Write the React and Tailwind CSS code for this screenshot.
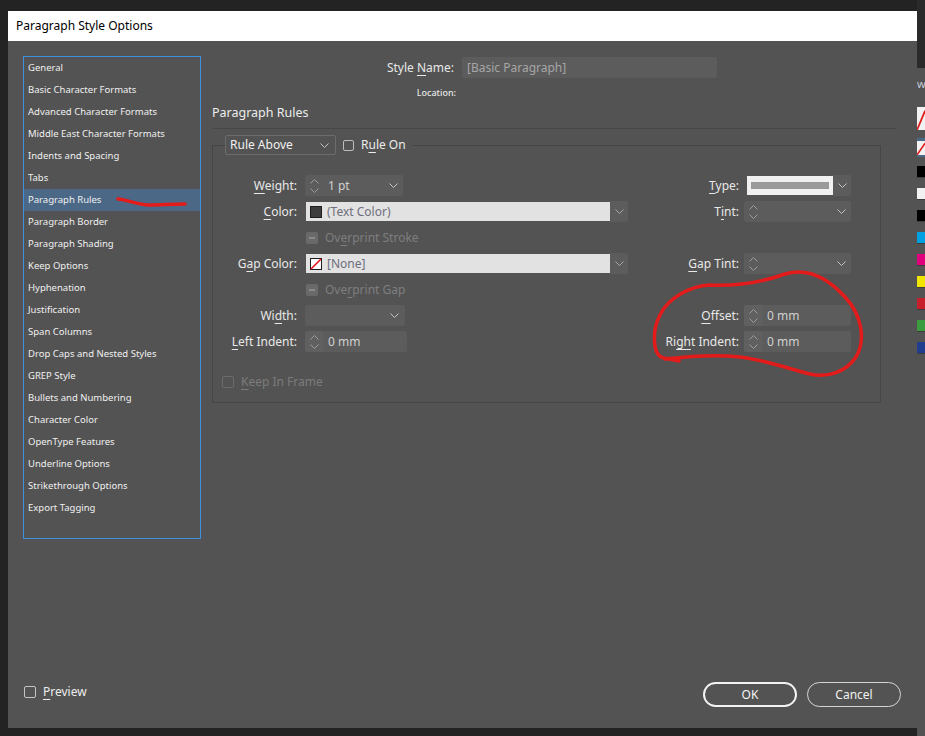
import React from "react";

const FONT = { fontFamily: '"Noto Sans", "Open Sans", sans-serif' };

function Chev({ color = "#c4c4c4" }) {
  return (
    <svg width="9" height="5" viewBox="0 0 9 5" className="shrink-0">
      <path d="M0.5 0.5 L4.5 4.5 L8.5 0.5" fill="none" stroke={color} strokeWidth="1" />
    </svg>
  );
}

function Spin() {
  return (
    <svg width="9" height="16" viewBox="0 0 9 16" className="shrink-0">
      <path d="M0.5 5.5 L4.5 1.5 L8.5 5.5 M0.5 10.5 L4.5 14.5 L8.5 10.5" fill="none" stroke="#9c9c9c" strokeWidth="1" />
    </svg>
  );
}

function U({ children }) {
  return <span className="underline decoration-1 underline-offset-[3px]">{children}</span>;
}

function LLabel({ children, dim }) {
  return (
    <div className={"w-[84px] shrink-0 text-right text-[12px] " + (dim ? "text-[#7c7c7c]" : "text-[#e8e8e8]")}>
      {children}
    </div>
  );
}

function RLabel({ children, gap = "mr-[5px]" }) {
  return <div className={"shrink-0 text-right text-[12px] text-[#e8e8e8] " + gap}>{children}</div>;
}

function SpinField({ w, value, splitSpin, drop }) {
  return (
    <div className={"flex h-[21px] items-center rounded-[2px] bg-[#5c5c5c] " + w}>
      <div className={"flex h-full w-[18px] items-center justify-center rounded-l-[2px] " + (splitSpin ? "bg-[#606060]" : "")}>
        <Spin />
      </div>
      <div className="flex-1 pl-[5px] text-[12px] text-[#d0d0d0]">{value}</div>
      {drop && (
        <div className="flex w-[20px] justify-center">
          <Chev />
        </div>
      )}
    </div>
  );
}

function ColorField({ swatch, text }) {
  return (
    <div className="ml-[9px] flex h-[21px] items-center">
      <div className="flex h-[19px] w-[304px] items-center bg-[#e2e2e2] pl-[4px]">
        {swatch}
        <span className="ml-[5px] text-[12px] text-[#6e6e7c]">{text}</span>
      </div>
      <div className="flex h-[21px] w-[18px] items-center justify-center rounded-r-[2px] bg-[#5c5c5c]">
        <Chev color="#a8a8a8" />
      </div>
    </div>
  );
}

function DisabledCheck({ children }) {
  return (
    <div className="ml-[9px] flex items-center">
      <div className="flex h-[12px] w-[12px] items-center justify-center rounded-[2px] bg-[#696969]">
        <div className="h-[2px] w-[6px] bg-[#8a8a8a]" />
      </div>
      <span className="ml-[7px] text-[12px] text-[#7e7e7e]">{children}</span>
    </div>
  );
}

const listItems = [
  "General",
  "Basic Character Formats",
  "Advanced Character Formats",
  "Middle East Character Formats",
  "Indents and Spacing",
  "Tabs",
  "Paragraph Rules",
  "Paragraph Border",
  "Paragraph Shading",
  "Keep Options",
  "Hyphenation",
  "Justification",
  "Span Columns",
  "Drop Caps and Nested Styles",
  "GREP Style",
  "Bullets and Numbering",
  "Character Color",
  "OpenType Features",
  "Underline Options",
  "Strikethrough Options",
  "Export Tagging",
];

const swatches = ["#000000", "#f2f2f2", "#000000", "#00a0e3", "#e0007c", "#f2e500", "#c8202a", "#3a9b3f", "#213d8e"];

function NoneSwatch({ className }) {
  return (
    <svg width="8" height="12" viewBox="0 0 8 12" preserveAspectRatio="none" className={className}>
      <rect x="0" y="0" width="8" height="12" fill="#f2f2f2" />
      <path d="M0 12 L8 2" stroke="#e01b1b" strokeWidth="1.5" />
    </svg>
  );
}

export default function App() {
  return (
    <div className="relative h-[736px] w-[925px] overflow-hidden bg-[#232323]" style={FONT}>
      <div className="flex h-full items-start">
        <div className="w-[8px] shrink-0" />
        {/* Dialog */}
        <div className="mt-[11px] flex h-[717px] w-[909px] shrink-0 flex-col">
          <div className="flex h-[30px] items-center bg-white pl-[8px] text-[12px] text-black">
            Paragraph Style Options
          </div>
          <div className="flex flex-1 flex-col bg-[#535353]">
            <div className="flex flex-1 pl-[15px] pt-[15px]">
              {/* left list */}
              <div className="h-[483px] w-[178px] shrink-0 border border-[#3d8fe0]">
                {listItems.map((t) => (
                  <div
                    key={t}
                    className={
                      "flex h-[22px] items-center pl-[4px] text-[9.5px] text-[#f0f0f0] " +
                      (t === "Paragraph Rules" ? "bg-[#4b6886]" : "")
                    }
                  >
                    {t}
                  </div>
                ))}
              </div>
              {/* right content */}
              <div className="ml-[11px] w-[685px] shrink-0">
                <div className="mt-[1px] flex h-[21px] items-center">
                  <div className="w-[242px] text-right text-[12px] text-[#e8e8e8]">
                    Style <U>N</U>ame:
                  </div>
                  <div className="ml-[8px] flex h-[21px] w-[255px] items-center rounded-[2px] bg-[#5c5c5c] pl-[5px] text-[12px] text-[#a6a6a6]">
                    [Basic Paragraph]
                  </div>
                </div>
                <div className="mt-[8px] flex h-[14px] items-center">
                  <div className="w-[244px] text-right text-[9px] font-medium text-[#e8e8e8]">Location:</div>
                </div>
                <div className="mt-[5px] flex h-[16px] items-center text-[12.5px] text-[#ececec]">Paragraph Rules</div>
                <div className="mt-[7px] h-px w-full bg-[#474747]" />
                <fieldset className="mt-[6px] w-[669px] border border-[#464646] pb-[10px]">
                  <legend className="ml-[12px] flex h-[20px] items-center pr-[6px]">
                    <div className="flex h-[20px] w-[111px] items-center justify-between rounded-[2px] border border-[#6c6c6c] pl-[4px] pr-[6px] text-[12px] text-[#f0f0f0]">
                      <span>Rule Above</span>
                      <Chev />
                    </div>
                    <div className="ml-[7px] h-[11px] w-[11px] rounded-[2px] border border-[#bdbdbd]" />
                    <span className="ml-[7px] text-[12px] text-[#ececec]">
                      R<U>u</U>le On
                    </span>
                  </legend>
                  <div className="flex flex-col gap-[5px] pr-[29px] pt-[20px]">
                    {/* Weight / Type */}
                    <div className="flex h-[21px] items-center">
                      <LLabel>
                        <U>W</U>eight:
                      </LLabel>
                      <div className="ml-[8px]">
                        <SpinField w="w-[98px]" value="1 pt" drop />
                      </div>
                      <div className="flex-1" />
                      <RLabel gap="mr-[8px]">
                        <U>T</U>ype:
                      </RLabel>
                      <div className="flex h-[21px] w-[104px] items-center">
                        <div className="flex h-[19px] w-[86px] items-center justify-center bg-[#f0f0f0]">
                          <div className="h-[7px] w-[78px] bg-[#9a9a9a]" />
                        </div>
                        <div className="flex h-[21px] w-[18px] items-center justify-center rounded-r-[2px] bg-[#5c5c5c]">
                          <Chev />
                        </div>
                      </div>
                    </div>
                    {/* Color / Tint */}
                    <div className="flex h-[21px] items-center">
                      <LLabel>
                        <U>C</U>olor:
                      </LLabel>
                      <ColorField
                        swatch={<div className="h-[12px] w-[12px] border border-[#1e1e1e] bg-[#3d3d3d]" />}
                        text="(Text Color)"
                      />
                      <div className="flex-1" />
                      <RLabel>
                        T<U>i</U>nt:
                      </RLabel>
                      <SpinField w="w-[107px]" value="" drop />
                    </div>
                    {/* Overprint Stroke */}
                    <div className="flex h-[21px] items-center">
                      <div className="w-[84px]" />
                      <DisabledCheck>
                        Ov<U>e</U>rprint Stroke
                      </DisabledCheck>
                    </div>
                    {/* Gap Color / Gap Tint */}
                    <div className="flex h-[21px] items-center">
                      <LLabel>
                        G<U>a</U>p Color:
                      </LLabel>
                      <ColorField
                        swatch={
                          <svg width="12" height="12" viewBox="0 0 12 12">
                            <rect x="0.5" y="0.5" width="11" height="11" fill="#ffffff" stroke="#1e1e1e" />
                            <path d="M1 11 L11 1" stroke="#e3161b" strokeWidth="1.6" />
                          </svg>
                        }
                        text="[None]"
                      />
                      <div className="flex-1" />
                      <RLabel>
                        <U>G</U>ap Tint:
                      </RLabel>
                      <SpinField w="w-[107px]" value="" drop />
                    </div>
                    {/* Overprint Gap */}
                    <div className="flex h-[21px] items-center">
                      <div className="w-[84px]" />
                      <DisabledCheck>
                        Ove<U>r</U>print Gap
                      </DisabledCheck>
                    </div>
                    {/* Width / Offset */}
                    <div className="flex h-[21px] items-center">
                      <LLabel>
                        Wi<U>d</U>th:
                      </LLabel>
                      <div className="ml-[8px] flex h-[21px] w-[100px] items-center justify-end rounded-[2px] bg-[#5c5c5c] pr-[6px]">
                        <Chev />
                      </div>
                      <div className="flex-1" />
                      <RLabel>
                        <U>O</U>ffset:
                      </RLabel>
                      <SpinField w="w-[107px]" value="0 mm" splitSpin />
                    </div>
                    {/* Left Indent / Right Indent */}
                    <div className="flex h-[21px] items-center">
                      <LLabel>
                        <U>L</U>eft Indent:
                      </LLabel>
                      <div className="ml-[8px]">
                        <SpinField w="w-[102px]" value="0 mm" splitSpin />
                      </div>
                      <div className="flex-1" />
                      <RLabel>
                        Ri<U>gh</U>t Indent:
                      </RLabel>
                      <SpinField w="w-[107px]" value="0 mm" splitSpin />
                    </div>
                    {/* Keep In Frame */}
                    <div className="mt-[14px] flex h-[21px] items-center pl-[9px]">
                      <div className="h-[12px] w-[12px] rounded-[2px] border border-[#6c6c6c]" />
                      <span className="ml-[7px] text-[12px] text-[#7c7c7c]">
                        <U>K</U>eep In Frame
                      </span>
                    </div>
                  </div>
                </fieldset>
              </div>
            </div>
            {/* footer */}
            <div className="flex items-center pb-[21px] pl-[16px] pr-[16px]">
              <div className="mb-[6px] flex items-center">
                <div className="h-[12px] w-[12px] rounded-[2px] border border-[#c4c4c4]" />
                <span className="ml-[7px] text-[12px] text-[#ececec]">
                  <U>P</U>review
                </span>
              </div>
              <div className="flex-1" />
              <button className="flex h-[25px] w-[94px] items-center justify-center rounded-full border-2 border-[#f2f2f2] text-[12px] text-[#f4f4f4]">
                OK
              </button>
              <button className="ml-[10px] flex h-[25px] w-[94px] items-center justify-center rounded-full border border-[#d6d6d6] text-[12px] text-[#f0f0f0]">
                Cancel
              </button>
            </div>
          </div>
        </div>
        {/* right strip (swatches panel behind) */}
        <div className="flex h-full w-[8px] shrink-0 flex-col">
          <div className="h-[68px] bg-[#2a2a2a]" />
          <div className="flex flex-1 flex-col bg-[#535353]">
            <div className="h-[30px] overflow-hidden pt-[10px] text-[11px] leading-none text-[#c6cdd6]">w</div>
            <div className="mt-[9px] flex h-[23px]">
              <NoneSwatch className="h-[23px] w-[8px]" />
            </div>
            <div className="mt-[8px] flex h-[19px] items-center bg-[#4b6886]">
              <NoneSwatch className="h-[14px] w-[8px]" />
            </div>
            <div className="mt-[9px] flex flex-col gap-[10px]">
              {swatches.map((c, i) => (
                <div key={i} className="h-[12px] border-b border-[#3d3d3d]" style={{ background: c }} />
              ))}
            </div>
          </div>
        </div>
      </div>
      {/* red freehand annotations */}
      <svg className="pointer-events-none absolute left-0 top-0" width="925" height="736" viewBox="0 0 925 736">
        <path
          d="M118 199 C128 200 135 204 148 205 C160 205 172 204 185 204"
          fill="none"
          stroke="#e31b1b"
          strokeWidth="3.5"
          strokeLinecap="round"
        />
        <path
          d="M679 361 L664 358 C652 356 652 330 660 315 C668 298 690 286 710 285 C735 286 760 283 785 274 C805 268 825 275 845 297 C862 315 866 340 856 357 C846 372 828 378 810 374 C790 369 765 360 740 357 C715 354 690 356 665 359"
          fill="none"
          stroke="#e31b1b"
          strokeWidth="3.5"
          strokeLinecap="round"
          strokeLinejoin="round"
        />
      </svg>
    </div>
  );
}
